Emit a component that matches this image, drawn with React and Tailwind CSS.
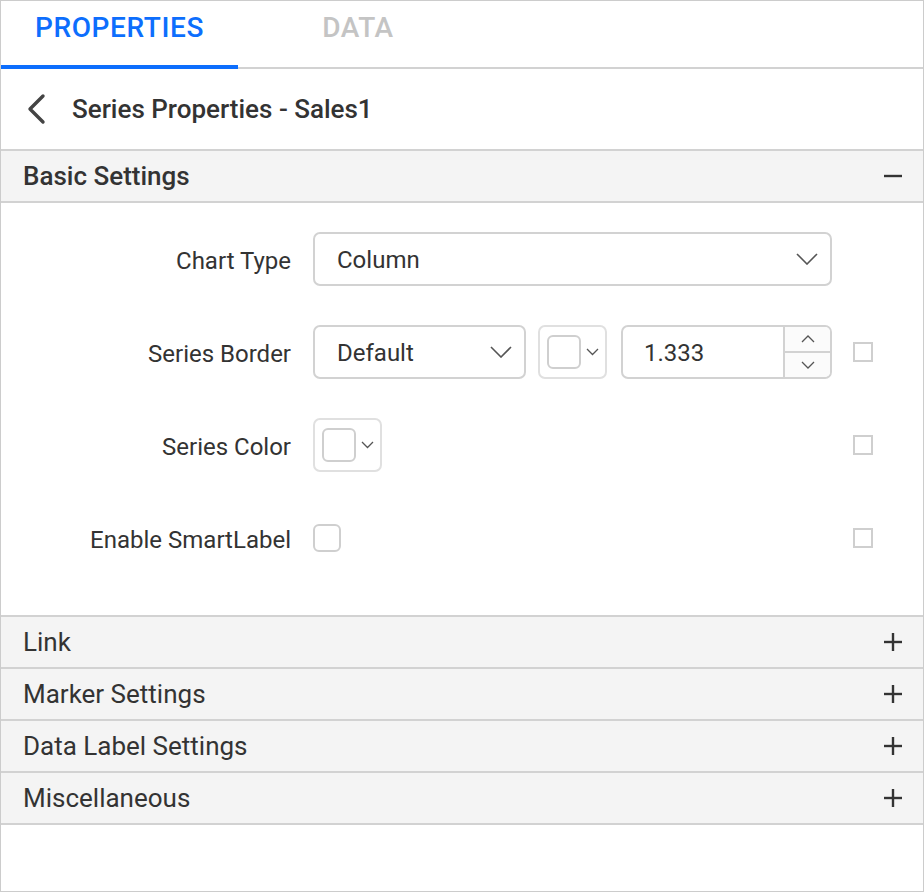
import React from "react";

const Chevron = ({ className = "" }) => (
  <svg className={className} viewBox="0 0 22 12" fill="none" stroke="#555" strokeWidth="1.6">
    <path d="M1 1l10 10L21 1" />
  </svg>
);

const SmallChevron = ({ up = false }) => (
  <svg className="w-[14px] h-[8px]" viewBox="0 0 14 8" fill="none" stroke="#555" strokeWidth="1.3">
    {up ? <path d="M1 7l6-6 6 6" /> : <path d="M1 1l6 6 6-6" />}
  </svg>
);

const ColorPicker = () => (
  <div className="w-[69px] h-[54px] rounded-[7px] border-2 border-[#e0e0e0] flex items-center pl-[7px] gap-[5px]">
    <div className="w-[34px] h-[34px] rounded-[6px] border-2 border-[#cfcfcf] bg-white" />
    <svg className="w-[13px] h-[8px]" viewBox="0 0 13 8" fill="none" stroke="#555" strokeWidth="1.3">
      <path d="M1 1l5.5 5.5L12 1" />
    </svg>
  </div>
);

const SideCheck = () => (
  <div className="w-[20px] h-[20px] border-2 border-[#cfcfcf] bg-white" />
);

const Row = ({ label, children, check = true }) => (
  <div className="flex items-center h-[54px]">
    <div className="w-[290px] text-right text-[24px] text-[#333] whitespace-nowrap pt-[3px]">{label}</div>
    <div className="w-[22px]" />
    <div className="w-[519px] flex items-center gap-[12px]">{children}</div>
    <div className="w-[21px]" />
    {check && <SideCheck />}
  </div>
);

const Section = ({ title, open = false }) => (
  <div className="h-[52px] bg-[#f4f4f4] border-b-2 border-[#d2d2d2] flex items-center justify-between pl-[22px] pr-[21px]">
    <span className={`text-[26px] text-[#333] pt-[1px] ${open ? "font-medium" : ""}`}>{title}</span>
    <svg className="w-[18px] h-[18px]" viewBox="0 0 18 18" fill="none" stroke="#333" strokeWidth="2.4">
      <path d="M0 9h18" />
      {!open && <path d="M9 0v18" />}
    </svg>
  </div>
);

export default function App() {
  return (
    <div
      className="w-[924px] h-[892px] border border-[#cccccc] bg-white flex flex-col overflow-hidden"
      style={{ fontFamily: "Roboto, 'Liberation Sans', sans-serif" }}
    >
      {/* Tabs */}
      <div className="h-[68px] border-b-2 border-[#d2d2d2] flex shrink-0">
        <div className="relative w-[237px] flex items-center justify-center pb-[13px]">
          <span className="text-[28px] font-medium tracking-[0.6px] text-[#0d6efd]">PROPERTIES</span>
          <div className="absolute left-0 right-0 bottom-[-2px] h-[4px] bg-[#0d6efd]" />
        </div>
        <div className="w-[240px] flex items-center justify-center pb-[13px]">
          <span className="text-[28px] font-medium tracking-[0.6px] text-[#c4c4c4]">DATA</span>
        </div>
      </div>

      {/* Title */}
      <div className="h-[82px] flex items-center shrink-0 border-b-2 border-[#d2d2d2]">
        <svg className="ml-[24px] w-[22px] h-[32px]" viewBox="0 0 22 32" fill="none" stroke="#444" strokeWidth="3.4" strokeLinecap="round" strokeLinejoin="round">
          <path d="M18 3L5 16l13 13" />
        </svg>
        <span className="ml-[25px] text-[26px] font-medium text-[#333]">Series Properties - Sales1</span>
      </div>

      <Section title="Basic Settings" open />

      {/* Basic settings content */}
      <div className="flex flex-col gap-[39px] pt-[29px] pb-[50px] border-b-2 border-[#d2d2d2]">
        <Row label="Chart Type" check={false}>
          <div className="w-[519px] h-[54px] rounded-[7px] border-2 border-[#d2d2d2] flex items-center justify-between pl-[22px] pr-[12px]">
            <span className="text-[24px] text-[#333] pt-[2px]">Column</span>
            <Chevron className="w-[22px] h-[12px]" />
          </div>
        </Row>
        <Row label="Series Border">
          <div className="w-[214px] h-[54px] rounded-[7px] border-2 border-[#d2d2d2] flex items-center justify-between pl-[22px] pr-[12px]">
            <span className="text-[24px] text-[#333] pt-[2px]">Default</span>
            <Chevron className="w-[22px] h-[12px]" />
          </div>
          <ColorPicker />
          <div className="w-[212px] h-[54px] rounded-[7px] border-2 border-[#d2d2d2] flex overflow-hidden ml-[2px]">
            <div className="flex-1 flex items-center pl-[21px] pt-[2px] text-[24px] text-[#333]">1.333</div>
            <div className="w-[47px] border-l-2 border-[#d2d2d2] flex flex-col bg-[#fbfbfb]">
              <div className="flex-1 flex items-center justify-center border-b-2 border-[#d2d2d2]">
                <SmallChevron up />
              </div>
              <div className="flex-1 flex items-center justify-center">
                <SmallChevron />
              </div>
            </div>
          </div>
        </Row>
        <Row label="Series Color">
          <ColorPicker />
          <div className="flex-1" />
        </Row>
        <Row label="Enable SmartLabel">
          <div className="w-[28px] h-[28px] rounded-[6px] border-2 border-[#cfcfcf] bg-white" />
          <div className="flex-1" />
        </Row>
      </div>

      <Section title="Link" />
      <Section title="Marker Settings" />
      <Section title="Data Label Settings" />
      <Section title="Miscellaneous" />
    </div>
  );
}
